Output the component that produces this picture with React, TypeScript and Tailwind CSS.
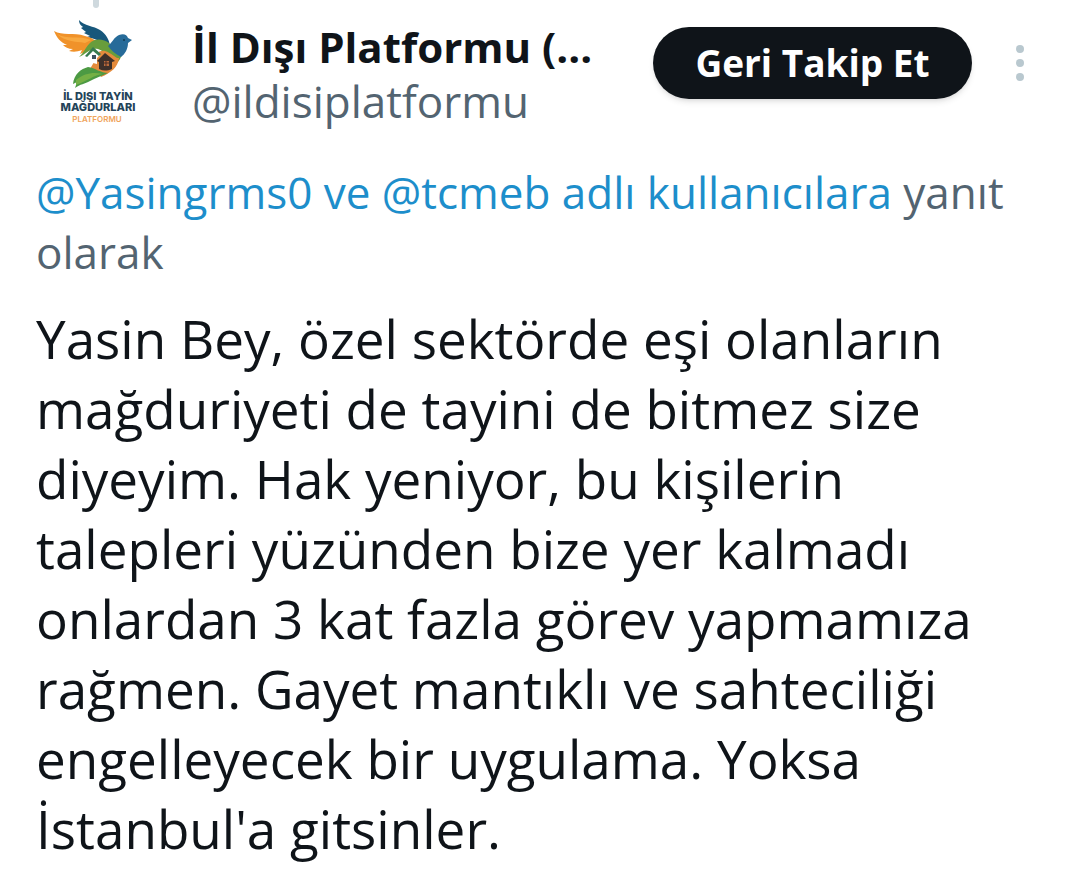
import React from "react";

const tweetLines = [
  "Yasin Bey, özel sektörde eşi olanların",
  "mağduriyeti de tayini de bitmez size",
  "diyeyim. Hak yeniyor, bu kişilerin",
  "talepleri yüzünden bize yer kalmadı",
  "onlardan 3 kat fazla görev yapmamıza",
  "rağmen. Gayet mantıklı ve sahteciliği",
  "engelleyecek bir uygulama. Yoksa",
  "İstanbul'a gitsinler.",
];

const Avatar: React.FC = () => {
  return (
    <svg viewBox="0 0 120 120" className="size-[120px]" role="img" aria-label="İl Dışı Tayin Mağdurları Platformu">
      {/* back wing */}
      <path d="M43 8 C48 14 58 14 64 18 C70 22 73 27 74 34 C66 29 59 27 51 25 L54 24 L48 21 L50 20 L45 16 L47 15 C44 13 43 11 43 8Z" fill="#17577b" />
      {/* front wing */}
      <path d="M18 19 C26 24 38 20 49 24 C56 26 60 28 62 32 L53 38 L44 42 L46 38 C41 40 37 40 33 39 L37 37 C32 37 29 35 27 33 L31 33 C24 30 21 26 18 19Z" fill="#f0922a" />
      <path d="M21 22 C31 28 42 23 55 28 L49 31 C39 29 29 30 21 22Z" fill="#f8a940" />
      {/* body and head */}
      <path d="M43 45 C48 41 50 34 55 30 C60 26 68 27 73 31 C76 36 80 39 86 42 C85 46 83 49 80 52 C74 46 70 40 62 37 C55 35 50 42 43 45Z" fill="#689d3c" />
      <path d="M72 34 C76 31 78 25 83 23 C88 21 91 23 92 26 L96 28 L92 31 C92 37 89 42 85 45 C79 42 75 38 72 34Z" fill="#276b99" />
      <path d="M58 50 C59 43 62 38 69 39 C76 41 80 47 83 46 C82 55 75 61 65 65 C62 60 58 58 54 57Z" fill="#e48b3c" />
      {/* tail */}
      <path d="M52 55 C59 56 65 61 72 61 C66 64 59 66 54 69 C49 72 44 72 39 76 L41 70 L37 72 C38 62 45 57 52 55Z" fill="#4c9a43" />
      <path d="M40 68 C49 61 57 60 67 62 C58 63 51 69 40 73Z" fill="#75b045" />
      {/* houses */}
      <path d="M51 44 L57 38 L64 43 L61 46 V52 L53 50 V44Z" fill="#fff" />
      <path d="M49 44 L57 35 L65 42 L63 44 L57 39 L51 45Z" fill="#387c50" />
      <path d="M56 43h4v4h-4z" fill="#3c5360" />
      <path d="M61 49 L69 41 L79 49 L76 50 V57 C71 59 67 59 63 57 V50Z" fill="#3d302a" />
      <path d="M68 49h5v5h-5z" fill="#b96b3c" />
      <path d="M70 49v5M68 51h5" stroke="#442d26" strokeWidth="1" />
      <circle cx="88" cy="28" r="1" fill="#153a50" />
      <g textAnchor="middle" fontFamily="Inter, sans-serif" fontWeight="800" fill="#244459">
        <text x="62" y="88" fontSize="11">İL DIŞI TAYİN</text>
        <text x="62" y="99" fontSize="11">MAĞDURLARI</text>
        <text x="61" y="110" fontSize="8" fontWeight="600" fill="#f0a45b">PLATFORMU</text>
      </g>
    </svg>
  );
};

const TweetHeader: React.FC = () => {
  return (
    <header className="flex">
      <div className="flex w-[120px] shrink-0 flex-col items-center gap-1">
        <div className="h-2 w-[6px] rounded-b-full bg-[#cfd9de]" />
        <Avatar />
      </div>
      <div className="ml-9 min-w-0 flex-1 pt-5">
        <h1 className="text-[42px] leading-[54px] font-bold whitespace-nowrap">İl Dışı Platformu (...</h1>
        <p className="text-[44px] leading-[54px] whitespace-nowrap text-[#536471]">@ildisiplatformu</p>
      </div>
      <div className="mt-[27px] mr-3 flex h-[72px] shrink-0 items-center gap-9">
        <button
          type="button"
          className="h-[72px] w-[319px] rounded-full bg-[#0f1419] text-[37px] leading-[48px] font-bold text-white shadow-md"
        >
          Geri Takip Et
        </button>
        <button type="button" aria-label="Daha fazla" className="flex w-6 flex-col items-center gap-[6px]">
          <span className="size-2 rounded-full bg-[#b9c8cf]" />
          <span className="size-2 rounded-full bg-[#b9c8cf]" />
          <span className="size-2 rounded-full bg-[#b9c8cf]" />
        </button>
      </div>
    </header>
  );
};

const App: React.FC = () => {
  return (
    <main className="min-h-screen bg-white px-9 pb-3 font-['Open_Sans',sans-serif] text-[#0f1419]">
      <TweetHeader />
      <p className="mt-[30px] text-[44px] leading-[60px] text-[#536471]">
        <a href="#kullanicilar" className="text-[#1d8ecb]">
          @Yasingrms0 ve @tcmeb adlı kullanıcılara
        </a>{" "}
        yanıt olarak
      </p>
      <p className="mt-[22px] text-[53px] leading-[70px] whitespace-pre-line">{tweetLines.join("\n")}</p>
    </main>
  );
};

export default App;
